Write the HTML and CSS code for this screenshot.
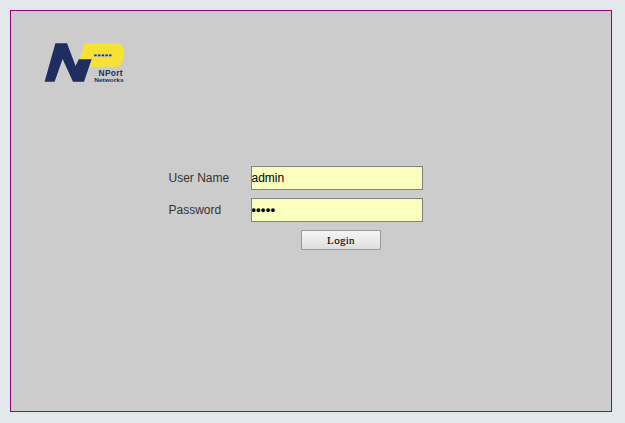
FILE: index.html
```html
<!DOCTYPE html>
<html lang="en">
<head>
<meta charset="utf-8">
<title>Login</title>
<link rel="stylesheet" href="styles.css">
</head>
<body>
<main class="panel">
  <svg class="logo" viewBox="44 42 82 42" width="82" height="42" role="img" aria-label="NPort Networks">
    <path class="logo-yellow" d="M84.4 43.3H117.5Q120.5 43.3 122 46L123.6 49.5Q124.2 51 124.1 53V57L121.6 63Q120.2 66.7 116.5 66.7H90L92 59.3H79.7Z"/>
    <path class="logo-blue" d="M44.6 81.8L55.4 43.2H67L75.6 66L78.8 59.3H91.6L84 81.8H73L62.6 59L54.6 81.8Z"/>
    <path class="logo-slot" d="M93.5 53.3H112L110.8 57.3H92.3Z"/>
    <path class="logo-dots" d="M94.3 55.3H111.5"/>
    <text class="logo-name" x="98.6" y="76.3" textLength="24">NPort</text>
    <text class="logo-sub" x="94.3" y="81.7" textLength="29.2" lengthAdjust="spacingAndGlyphs">Networks</text>
  </svg>
  <form class="login">
    <label class="label" for="user">User Name</label>
    <input class="field" id="user" type="text" value="admin">
    <label class="label" for="pass">Password</label>
    <input class="field secret" id="pass" type="password" value="admin">
    <button class="submit" type="button">Login</button>
  </form>
</main>
</body>
</html>
```
FILE: styles.css
```css
body {
  margin: 0;
  padding: 10px;
  background: #e3e9eb;
  font-family: "Liberation Sans", Arial, sans-serif;
}
.panel {
  box-sizing: border-box;
  width: 602px;
  height: 402px;
  padding: 31px 0 0 33px;
  border: 1px solid #990080;
  background: #ccc;
}
.logo {
  display: block;
}
.logo-yellow { fill: #f5e233; }
.logo-blue { fill: #202d60; }
.logo-slot { fill: #d8d39a; }
.logo-dots {
  stroke: #202d60;
  stroke-width: 1.8;
  stroke-dasharray: 2.4 1.3;
}
.logo-name,
.logo-sub {
  fill: #202d60;
  font-weight: bold;
}
.logo-name { font-size: 8.4px; }
.logo-sub { font-size: 6px; }
.login {
  display: grid;
  grid-template-columns: 82.5px 172px;
  grid-template-rows: 24px 24px 20px;
  row-gap: 8px;
  margin: 82px 0 0 124.5px;
  align-items: center;
}
.label {
  color: #333;
  font-size: 12px;
}
.field {
  box-sizing: border-box;
  width: 172px;
  height: 24px;
  margin: 0;
  padding: 0;
  border: 1px solid #828282;
  border-radius: 0;
  background: #faffbd;
  color: #000;
  font: 12px "Liberation Sans", Arial, sans-serif;
  text-indent: -0.5px;
}
.secret {
  padding-top: 1px;
  letter-spacing: 0.6px;
  -webkit-text-stroke: 0.4px #000;
}
.submit {
  grid-column: 2;
  width: 80px;
  height: 20px;
  margin: 0 0 0 50px;
  padding: 0;
  border: 1px solid #999;
  border-radius: 1px;
  background: linear-gradient(#f6f6f6, #dedede);
  color: #000;
  font: 11px "Liberation Serif", "Times New Roman", serif;
  -webkit-text-stroke: 0.1px #000;
  letter-spacing: 0.3px;
}
```
